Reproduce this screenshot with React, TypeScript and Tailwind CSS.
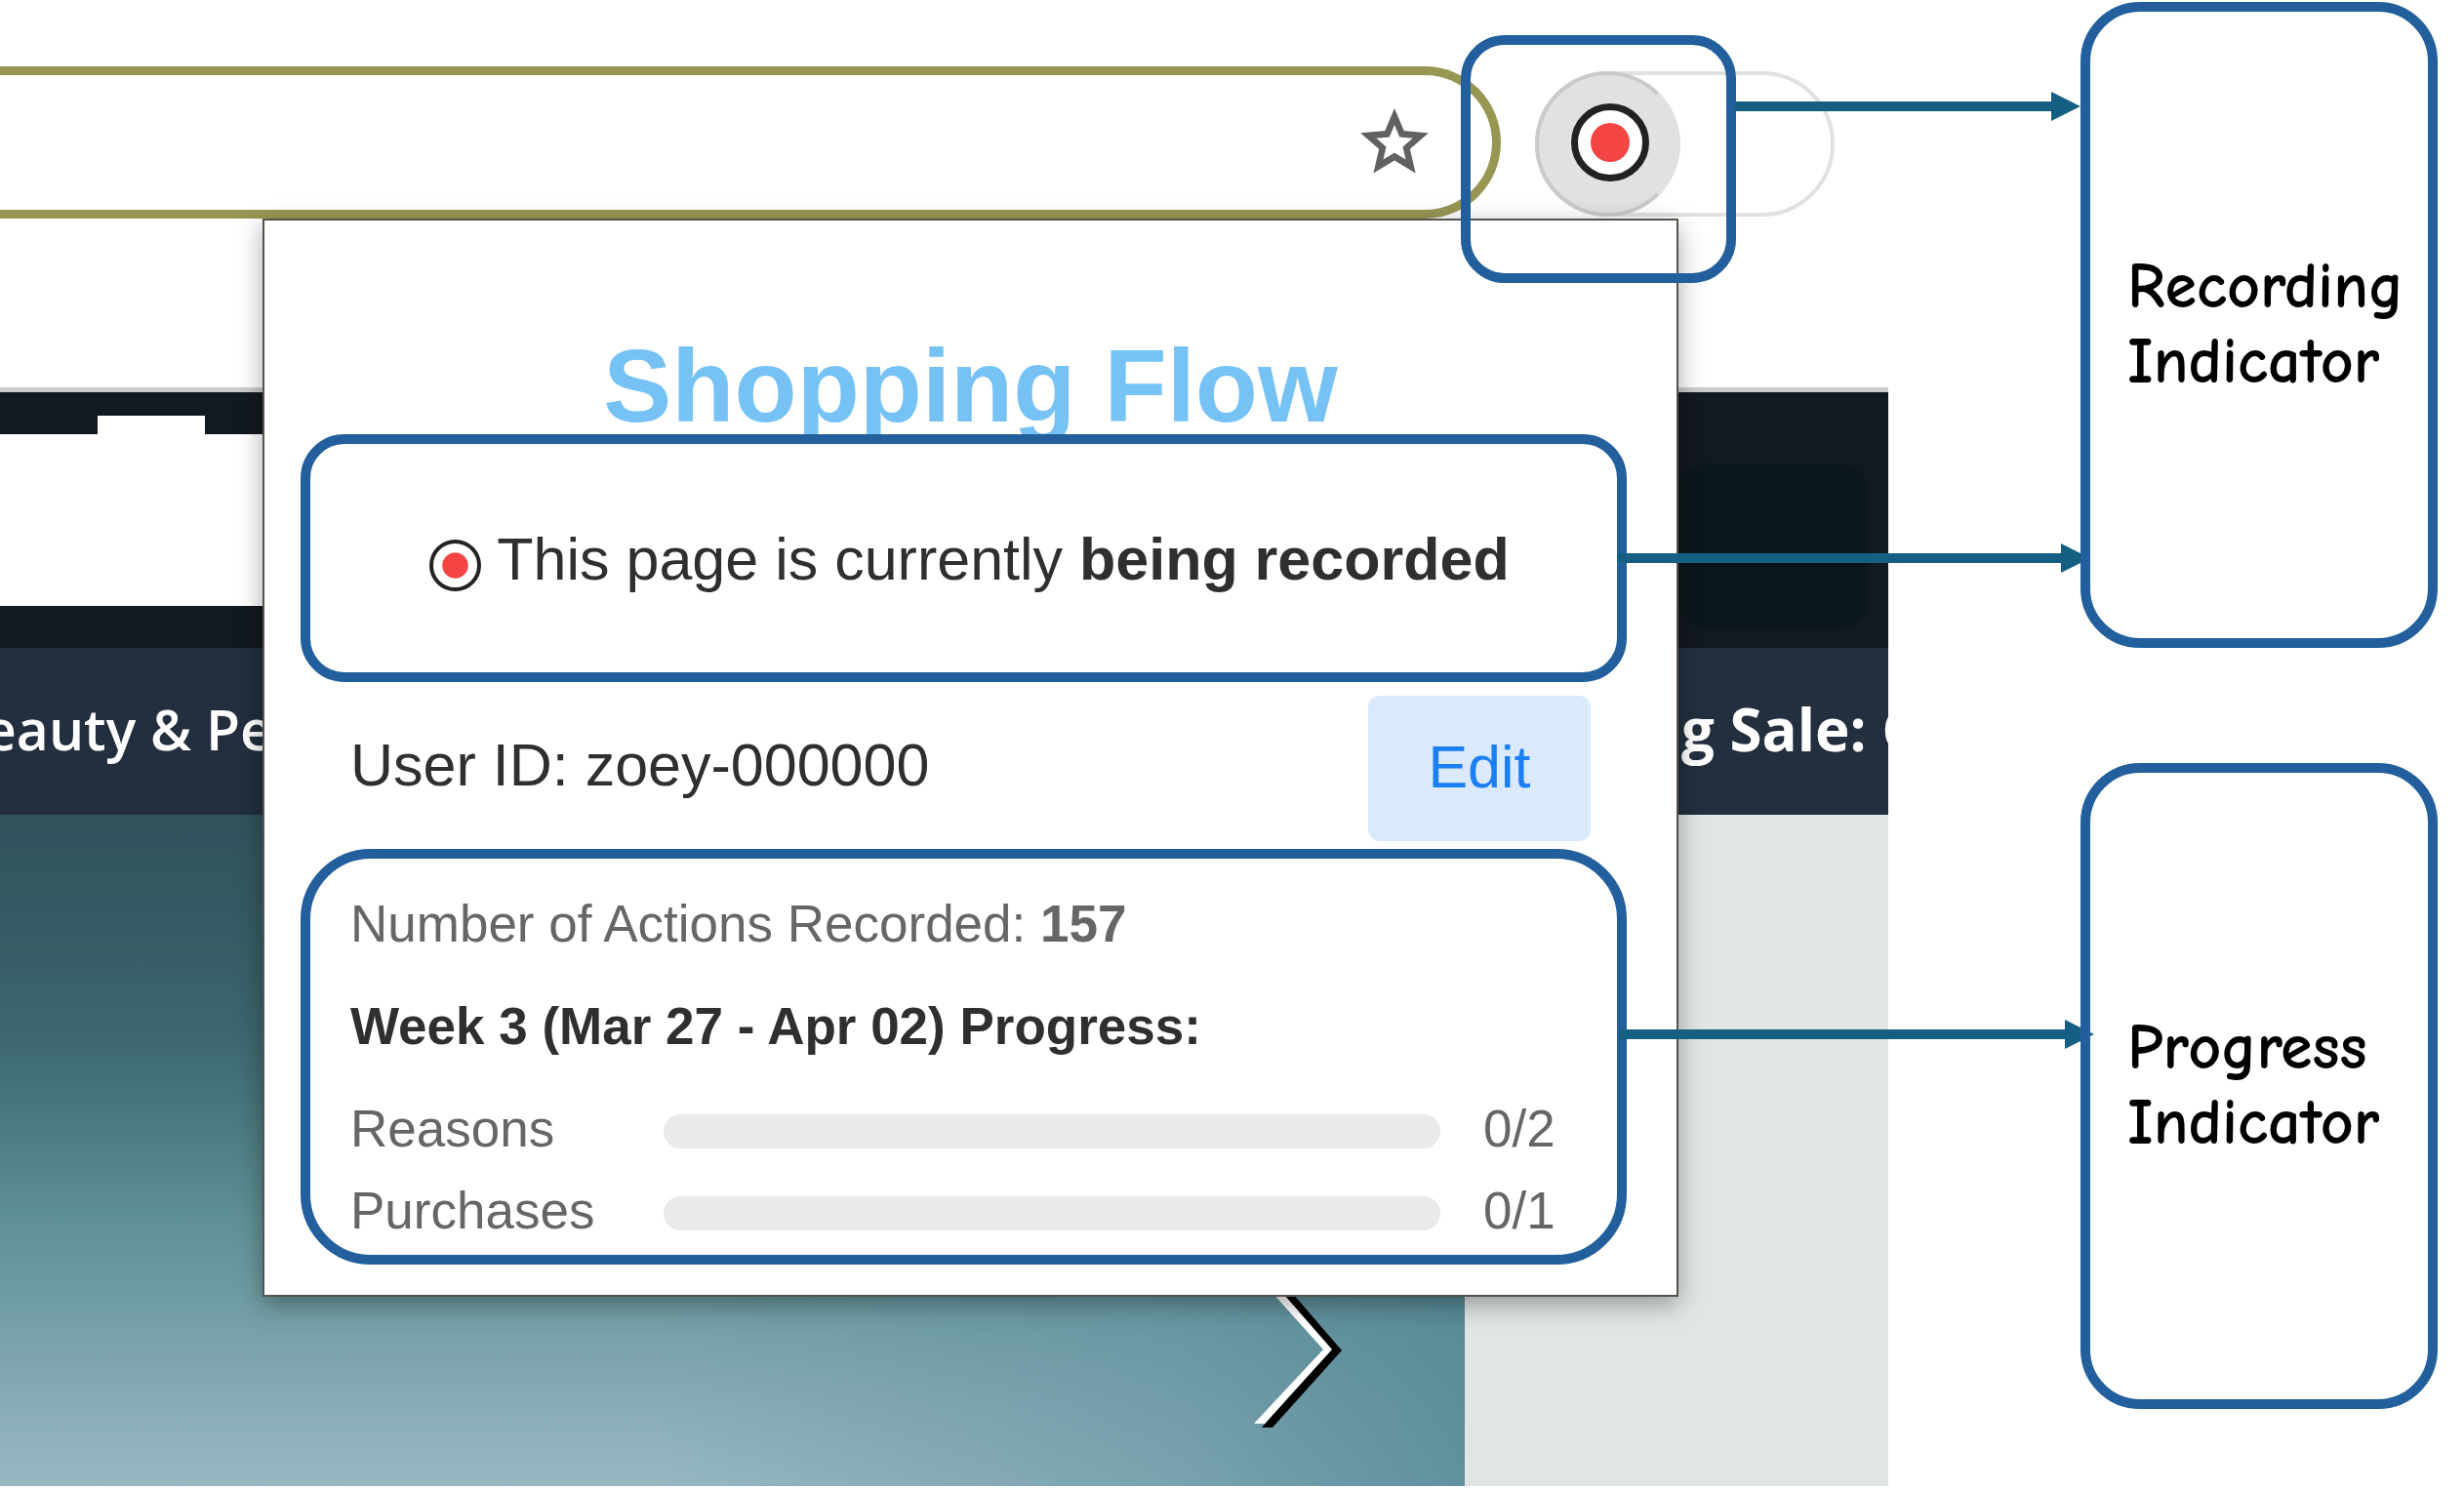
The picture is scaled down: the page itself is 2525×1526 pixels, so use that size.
import React from "react";

function RecordDot({ className, ring }: { className: string; ring: number }) {
  return (
    <svg viewBox="0 0 80 80" className={className} aria-hidden="true">
      <circle cx="40" cy="40" r={40 - ring / 2} fill="#fff" stroke="#222" strokeWidth={ring} />
      <circle cx="40" cy="40" r="20" fill="#f44545" />
    </svg>
  );
}

function Arrow({ className }: { className: string }) {
  return (
    <div className={`absolute z-20 flex h-[30px] items-center ${className}`}>
      <div className="h-[10px] flex-1 bg-[#156082]" />
      <svg viewBox="0 0 30 30" className="h-[30px] w-[30px]" aria-hidden="true">
        <path d="M0 0L30 15L0 30Z" fill="#156082" />
      </svg>
    </div>
  );
}

function AddressBar() {
  return (
    <div className="flex h-[397px] items-start bg-white pt-[68px]">
      <div className="flex h-[156px] flex-1 items-center justify-end rounded-r-full border-y-[9px] border-r-[9px] border-[#979653] pr-[60px]">
        <button aria-label="Bookmark this page">
          <svg
            viewBox="0 0 24 24"
            className="h-20 w-20"
            fill="#5f6163"
            stroke="#5f6163"
            strokeWidth="0.4"
            aria-hidden="true"
          >
            <path d="M22 9.24l-7.19-.62L12 2 9.19 8.63 2 9.24l5.46 4.73L5.82 21 12 17.27 18.18 21l-1.63-7.03L22 9.24zM12 15.4l-3.76 2.27 1-4.28-3.32-2.88 4.38-.38L12 6.1l1.71 4.04 4.38.38-3.32 2.88 1 4.28L12 15.4z" />
          </svg>
        </button>
      </div>
      <div className="mt-[5px] mr-[55px] ml-[35px] flex h-[149px] w-[307px] rounded-full border-4 border-[#e1e1e1]">
        <button
          aria-label="Recording extension"
          className="-m-1 flex h-[149px] w-[149px] items-center justify-center rounded-full border-4 border-[#cacaca] border-r-[#e1e1e1] bg-[#e1e1e1] pb-[3px] pl-1"
        >
          <RecordDot ring={7} className="h-20 w-20" />
        </button>
      </div>
    </div>
  );
}

function Storefront() {
  return (
    <div className="flex flex-1 flex-col">
      <div className="h-[5px] bg-[#cbcdcd]" />
      <div className="flex h-[262px] items-center justify-between bg-[#131920]">
        <div className="flex h-[214px] w-1/2 flex-col">
          <div className="ml-[100px] h-[19px] w-[110px] bg-white" />
          <div className="h-[176px] bg-white" />
        </div>
        <div className="mt-[54px] mr-5 h-[170px] w-[195px] rounded-[30px] bg-[#0c171b]" />
      </div>
      <nav className="flex h-[171px] items-center justify-between overflow-hidden bg-[#232f3e] pb-[6px] font-['Open_Sans',sans-serif] leading-[80px] text-white">
        <a href="#beauty" className="-ml-4 text-[57px] font-semibold whitespace-nowrap">
          eauty &amp; Pe
        </a>
        <a href="#sale" className="w-[212px] overflow-hidden text-[60px] font-bold whitespace-nowrap">
          g Sale: G
        </a>
      </nav>
      <div className="flex flex-1">
        <div className="flex flex-1 items-end justify-end bg-[linear-gradient(to_right,transparent_45%,#5c8e9d80_80%,#4f8493c0_100%),linear-gradient(to_bottom,#32525c_0%,#355962_14%,#3c666e_32%,#4b7a80_46%,#5f9095_60%,#6f9ca3_72%,#8aacb8_88%,#97b8c2_100%)] pr-[125px] pb-[60px]">
          <button aria-label="Next slide">
            <svg viewBox="0 0 92 160" className="h-[160px] w-[92px]" fill="none" aria-hidden="true">
              <path d="M11 1L22 1L91 81L20 160L9 160L79 81Z" fill="#000" />
              <path d="M1 1L12 1L81 80L12 156L1 156L72 80Z" fill="#fff" />
            </svg>
          </button>
        </div>
        <div className="w-[434px] bg-[#e1e5e5]" />
      </div>
    </div>
  );
}

function ProgressRow({ label, done, total }: { label: string; done: number; total: number }) {
  return (
    <div className="flex items-center">
      <span className="w-[321px]">{label}</span>
      <div
        role="progressbar"
        aria-label={label}
        aria-valuenow={done}
        aria-valuemax={total}
        className="mt-1 h-[35px] flex-1 overflow-hidden rounded-full bg-[#eaeaea]"
      >
        <div className="h-full bg-[#77c2f5]" style={{ width: `${(done / total) * 100}%` }} />
      </div>
      <span className="ml-11 w-[97px]">
        {done}/{total}
      </span>
    </div>
  );
}

function Popup() {
  return (
    <section className="absolute top-[224px] right-[215px] left-[269px] z-10 border-2 border-[#55534a] bg-white pt-[120px] pb-[31px] font-['Liberation_Sans',Arial,sans-serif] text-[#2f2f2f] shadow-[0_8px_24px_rgba(0,0,0,0.34)]">
      <h1 className="text-center text-[105px] leading-[99px] font-bold text-[#77c2f5]">Shopping Flow</h1>
      <div className="pr-[51px] pl-[37px]">
        <div className="relative flex h-[254px] items-center justify-center gap-4 rounded-[45px] border-10 border-[#225f9c] pt-[2px] pl-3 text-[61px] leading-[72px]">
          <RecordDot ring={6} className="mt-3 h-[53px] w-[53px]" />
          <p className="whitespace-nowrap">
            This page is currently <b>being recorded</b>
          </p>
        </div>
        <div className="mt-[14px] mb-2 flex items-center justify-between pr-[37px] pl-[51px] text-[61px] leading-[72px]">
          <p className="pb-2">User ID: zoey-000000</p>
          <button className="h-[149px] w-[228px] rounded-xl bg-[#dbe9fc] pb-1 text-[#1c7ef3]">Edit</button>
        </div>
        <div className="rounded-[72px] border-10 border-[#225f9c] pt-[37px] pr-10 pb-[15px] pl-[41px] text-[53px] leading-[60px] text-[#666]">
          <p>
            Number of Actions Recorded: <b>157</b>
          </p>
          <h2 className="my-[45px] font-bold text-[#2f2f2f]">Week 3 (Mar 27 - Apr 02) Progress:</h2>
          <div className="flex flex-col gap-6">
            <ProgressRow label="Reasons" done={0} total={2} />
            <ProgressRow label="Purchases" done={0} total={1} />
          </div>
        </div>
      </div>
    </section>
  );
}

function Callout({ first, second }: { first: string; second: string }) {
  return (
    <div className="relative z-30 flex h-[662px] items-center rounded-[61px] border-10 border-[#225f9c] pl-[38px] font-['Comic_Sans_MS','Comic_Neue',cursive] text-[66px] leading-[77px] font-bold text-black">
      <p>
        {first}
        <br />
        {second}
      </p>
    </div>
  );
}

export default function App() {
  return (
    <main className="relative flex min-h-screen overflow-hidden bg-white">
      <div className="relative flex flex-1 flex-col pb-[3px]">
        <AddressBar />
        <Storefront />
        <Popup />
        <div className="absolute top-9 right-[156px] z-20 h-[254px] w-[282px] rounded-[45px] border-10 border-[#225f9c]" />
      </div>
      <Arrow className="top-[94px] right-[393px] w-[354px]" />
      <Arrow className="top-[557px] right-[383px] w-[485px]" />
      <Arrow className="top-[1045px] right-[379px] w-[487px]" />
      <aside className="mr-[27px] ml-[197px] flex w-[366px] flex-col gap-[118px] pt-[2px]">
        <Callout first="Recording" second="Indicator" />
        <Callout first="Progress" second="Indicator" />
      </aside>
    </main>
  );
}
